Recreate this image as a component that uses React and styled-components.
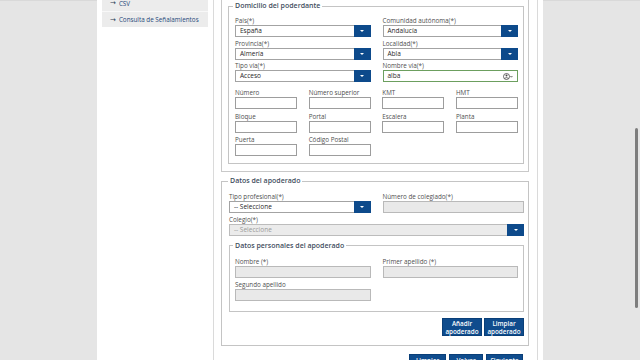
import React from "react";
import styled, { createGlobalStyle } from "styled-components";

const GlobalStyle = createGlobalStyle`
  html, body { margin: 0; padding: 0; }
  body { font-family: "Open Sans", "Noto Sans", sans-serif; background: #e5e5e5; }
  * { box-sizing: border-box; }
`;

const Page = styled.div`
  position: relative;
  display: flex;
  width: 640px;
  height: 360px;
  overflow: hidden;
  background: #e5e5e5;
`;

const Gutter = styled.div`
  flex: ${(p) => (p.$grow ? "1" : `0 0 ${p.$w}px`)};
  border-top: 1px solid #d9d9d9;
`;

const Sheet = styled.div`
  flex: 0 0 446px;
  display: flex;
  align-items: flex-start;
  gap: 5px;
  padding-left: 5px;
  background: #fff;
  height: 360px;
`;

const Sidebar = styled.div`
  flex: 0 0 106px;
`;

const Menu = styled.ul`
  list-style: none;
  margin: -5px 0 0;
  padding: 0;
  background: #ececec;
`;

const MenuItem = styled.li`
  display: flex;
  align-items: center;
  gap: 3px;
  height: 16px;
  padding-left: 8px;
  font-size: 6.3px;
  color: #27497a;
  border-top: ${(p) => (p.$sep ? "1px solid #f8f8f8" : "none")};
`;

const Arrow = styled.span`
  font-size: 7px;
  color: #2b3d55;
  font-family: "DejaVu Sans", sans-serif;
`;

const MainPanel = styled.div`
  flex: 0 0 325px;
  height: 360px;
  border-left: 1px solid #dadada;
  border-right: 1px solid #dadada;
  padding: 0 8px 0 7px;
`;

const CutBox = styled.div`
  border: 1px solid #c9c9c9;
  border-top: none;
  padding: 1px 4px 7px 6px;
`;

const Fieldset = styled.fieldset`
  margin: ${(p) => p.$mt || 0}px 0 0;
  min-width: 0;
  border: 1px solid #c4c4c4;
  padding: ${(p) => p.$pad};
`;

const Legend = styled.legend`
  margin-left: ${(p) => (p.$ml != null ? p.$ml : -2)}px;
  padding: 0 2px;
  font-size: 7px;
  line-height: 10px;
  font-weight: 600;
  color: #3f4e5e;
`;

const Grid = styled.div`
  display: grid;
  grid-template-columns: ${(p) => p.$cols || "1fr 1fr"};
  column-gap: ${(p) => (p.$cgap != null ? p.$cgap : 12)}px;
  row-gap: ${(p) => (p.$rgap != null ? p.$rgap : 2)}px;
  justify-content: space-between;
  margin-top: ${(p) => p.$mt || 0}px;
`;

const Field = styled.div`
  display: flex;
  flex-direction: column;
  grid-column: ${(p) => (p.$full ? "1 / -1" : "auto")};
`;

const Label = styled.div`
  font-size: 6.3px;
  line-height: 9px;
  height: 9px;
  color: #4f4f4f;
  white-space: nowrap;
`;

const SelectBox = styled.div`
  display: flex;
  align-items: stretch;
  height: 12px;
  border: 1px solid ${(p) => (p.$disabled ? "#bcbcbc" : "#a3a3a3")};
  background: ${(p) => (p.$disabled ? "#ebebeb" : "#fff")};
`;

const SelectValue = styled.span`
  flex: 1;
  padding-left: 4px;
  font-size: 6.5px;
  line-height: 10px;
  color: ${(p) => (p.$disabled ? "#9a9a9a" : "#1f1f1f")};
  white-space: nowrap;
  overflow: hidden;
`;

const SelectButton = styled.span`
  flex: 0 0 17px;
  margin: -1px -1px -1px 0;
  background: #0d4a8b;
  display: flex;
  align-items: center;
  justify-content: center;
`;

const Caret = styled.span`
  width: 0;
  height: 0;
  border-left: 2px solid transparent;
  border-right: 2px solid transparent;
  border-top: 2.5px solid #fff;
`;

const TextInput = styled.input`
  display: block;
  width: 100%;
  height: 12px;
  margin: 0;
  padding: 0 3px;
  font: inherit;
  font-size: 6.5px;
  border: 1px solid ${(p) => (p.disabled ? "#b9b9b9" : "#9d9d9d")};
  background: ${(p) => (p.disabled ? "#e9e9e9" : "#fff")};
  border-radius: 0;
  outline: none;
`;

const Combo = styled.div`
  display: flex;
  align-items: center;
  height: 12px;
  border: 1px solid #6c9f5f;
  background: #fff;
  padding: 0 4px;
`;

const ComboValue = styled.span`
  flex: 1;
  font-size: 6.5px;
  line-height: 10px;
  color: #1f1f1f;
`;

const ButtonRow = styled.div`
  display: flex;
  justify-content: flex-end;
  align-items: flex-start;
  gap: ${(p) => p.$gap || 2}px;
  margin-top: ${(p) => p.$mt || 0}px;
  padding-right: ${(p) => p.$pr || 0}px;
`;

const Button = styled.button`
  display: block;
  width: ${(p) => p.$w}px;
  height: ${(p) => (p.$single ? "auto" : "18px")};
  margin: 0;
  padding: ${(p) => (p.$single ? "1px 2px 4px" : "1px 2px")};
  border: 1px solid #0a3f78;
  background: #0f4c8d;
  color: #fff;
  font-family: "Open Sans", sans-serif;
  font-size: 6.3px;
  font-weight: 600;
  line-height: ${(p) => (p.$single ? "9px" : "8px")};
  text-align: center;
  cursor: pointer;
`;

const Thumb = styled.div`
  position: absolute;
  left: 635px;
  top: 128px;
  width: 3px;
  height: 180px;
  border-radius: 2px;
  background: #7d7d7d;
`;

const Select = ({ value, disabled }) => (
  <SelectBox $disabled={disabled}>
    <SelectValue $disabled={disabled}>{value}</SelectValue>
    <SelectButton>
      <Caret />
    </SelectButton>
  </SelectBox>
);

const UserChevron = () => (
  <svg width="10" height="7" viewBox="0 0 10 7" fill="none" stroke="#444" strokeWidth="0.8">
    <circle cx="3.5" cy="3.5" r="3" />
    <circle cx="3.5" cy="2.6" r="1" fill="#444" stroke="none" />
    <path d="M1.7 5.6 C2.2 4.3 4.8 4.3 5.3 5.6" />
    <path d="M7.4 3 L8.4 4.2 L9.4 3" />
  </svg>
);

const SelField = ({ label, value, disabled, full }) => (
  <Field $full={full}>
    <Label>{label}</Label>
    <Select value={value} disabled={disabled} />
  </Field>
);

const InField = ({ label, disabled, full }) => (
  <Field $full={full}>
    <Label>{label}</Label>
    <TextInput disabled={disabled} readOnly defaultValue="" />
  </Field>
);

export default function App() {
  return (
    <>
      <GlobalStyle />
      <Page>
        <Gutter $w={97} />
        <Sheet>
          <Sidebar>
            <Menu>
              <MenuItem>
                <Arrow>→</Arrow>CSV
              </MenuItem>
              <MenuItem $sep>
                <Arrow>→</Arrow>Consulta de Señalamientos
              </MenuItem>
            </Menu>
          </Sidebar>
          <MainPanel>
            <CutBox>
              <Fieldset $pad="5px 5px 7px 6px">
                <Legend>Domicilio del poderdante</Legend>
                <Grid $rgap={1.5}>
                  <SelField label="País(*)" value="España" />
                  <SelField label="Comunidad autónoma(*)" value="Andalucía" />
                  <SelField label="Provincia(*)" value="Almería" />
                  <SelField label="Localidad(*)" value="Abla" />
                  <SelField label="Tipo vía(*)" value="Acceso" />
                  <Field>
                    <Label>Nombre vía(*)</Label>
                    <Combo>
                      <ComboValue>alba</ComboValue>
                      <UserChevron />
                    </Combo>
                  </Field>
                </Grid>
                <Grid $cols="repeat(4, 62px)" $cgap={11} $rgap={2.5} $mt={6}>
                  <InField label="Número" />
                  <InField label="Número superior" />
                  <InField label="KMT" />
                  <InField label="HMT" />
                  <InField label="Bloque" />
                  <InField label="Portal" />
                  <InField label="Escalera" />
                  <InField label="Planta" />
                  <InField label="Puerta" />
                  <InField label="Código Postal" />
                </Grid>
              </Fieldset>
            </CutBox>

            <Fieldset $mt={4} $pad="6px 4px 9px 7px">
              <Legend $ml={-1}>Datos del apoderado</Legend>
              <Grid>
                <SelField label="Tipo profesional(*)" value="-- Seleccione" />
                <InField label="Número de colegiado(*)" disabled />
                <SelField label="Colegio(*)" value="-- Seleccione" disabled full />
              </Grid>
              <Fieldset $mt={4.5} $pad="6.5px 5px 10px 5px">
                <Legend>Datos personales del apoderado</Legend>
                <Grid>
                  <InField label="Nombre (*)" disabled />
                  <InField label="Primer apellido (*)" disabled />
                  <InField label="Segundo apellido" disabled />
                </Grid>
              </Fieldset>
              <ButtonRow $mt={6}>
                <Button $w={40}>Añadir apoderado</Button>
                <Button $w={40}>Limpiar apoderado</Button>
              </ButtonRow>
            </Fieldset>

            <ButtonRow $mt={8} $gap={3} $pr={6}>
              <Button $w={37} $single>Limpiar</Button>
              <Button $w={34} $single>Volver</Button>
              <Button $w={37} $single>Siguiente</Button>
            </ButtonRow>
          </MainPanel>
        </Sheet>
        <Gutter $grow />
        <Thumb />
      </Page>
    </>
  );
}
